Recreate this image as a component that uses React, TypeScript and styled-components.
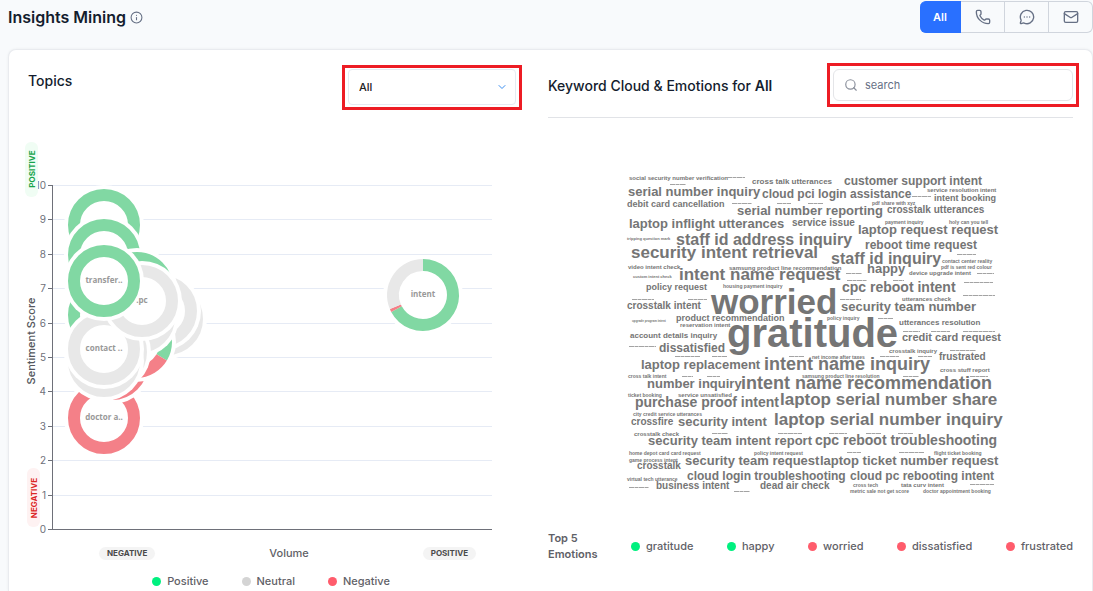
import React from 'react';
import styled, { createGlobalStyle, css } from 'styled-components';
import { Info, Phone, MessageCircleMore, Mail, Search, ChevronDown } from 'lucide-react';

const GlobalStyle = createGlobalStyle`
  * { box-sizing: border-box; }
  body { margin: 0; background: #f8fafc; font-family: Inter, "Liberation Sans", sans-serif; color: #141d2e; }
  button, input, select { font-family: inherit; }
`;

const Page = styled.div`
  display: flex;
  flex-direction: column;
  height: 100vh;
  min-height: 560px;
  overflow: hidden;
`;

const Header = styled.header`
  display: flex;
  align-items: flex-start;
  justify-content: space-between;
  padding: 1px 0 16px 8px;
`;

const PageTitle = styled.h1`
  display: flex;
  align-items: center;
  gap: 4px;
  margin: 0;
  font-size: 16px;
  line-height: 32px;
  font-weight: 600;
  color: #141d2e;
  svg { color: #667085; }
`;

const Segmented = styled.div`
  display: flex;
  height: 32px;
  border-radius: 6px;
`;

const Segment = styled.button<{ $active?: boolean }>`
  display: flex;
  align-items: center;
  justify-content: center;
  width: 44px;
  padding: 0;
  border: 1px solid #d0d5dd;
  border-left-width: 0;
  background: #f8fafc;
  color: #667085;
  font-size: 11px;
  font-weight: 600;
  &:last-child { border-radius: 0 6px 6px 0; }
  ${p => p.$active && css`
    width: 41px;
    border-color: #2970ff;
    background: #2970ff;
    color: #fff;
    border-radius: 6px 0 0 6px;
  `}
`;

const Card = styled.main`
  flex: 1;
  display: grid;
  grid-template-columns: 494fr 525fr;
  column-gap: 26px;
  align-items: start;
  margin: 0 0 0 8px;
  padding: 0 19px;
  background: #fff;
  border: 1px solid #e9ebef;
  border-bottom: 0;
  border-radius: 8px 8px 0 0;
  box-shadow: 0 0 3px rgba(16, 24, 40, 0.06);
`;

const Panel = styled.section`
  min-width: 0;
`;

const TopicsHeader = styled.div`
  display: flex;
  align-items: flex-start;
  justify-content: space-between;
  height: 80px;
  padding-top: 15px;
`;

const CloudHeader = styled.div`
  display: flex;
  align-items: center;
  justify-content: space-between;
  height: 68px;
  margin-bottom: 12px;
  padding-top: 5px;
  border-bottom: 1px solid #e1e3e7;
`;

const PanelTitle = styled.h2`
  margin: 0;
  font-size: 14px;
  line-height: 32px;
  font-weight: 500;
  color: #141d2e;
  strong { font-weight: 600; }
`;

const SelectHighlight = styled.div`
  position: relative;
  width: 180px;
  height: 45px;
  padding: 1px 3px;
  border: 3px solid #ed1c24;
  svg { position: absolute; right: 11px; top: 13px; color: #3b8ef0; pointer-events: none; }
`;

const Select = styled.select`
  appearance: none;
  width: 100%;
  height: 36px;
  padding: 0 10px;
  border: 1px solid #e6eaf2;
  border-radius: 4px;
  background: #fff;
  color: #222;
  font-size: 11px;
  font-weight: 500;
`;

const SearchHighlight = styled.div`
  margin-bottom: 2px;
  outline: 3px solid #ed1c24;
  outline-offset: 3px;
`;

const SearchBox = styled.label`
  display: flex;
  align-items: center;
  gap: 7px;
  width: 240px;
  height: 32px;
  padding: 0 10px;
  border: 1px solid #e4e5e8;
  border-radius: 6px;
  color: #8a8f9b;
`;

const SearchInput = styled.input`
  flex: 1;
  min-width: 0;
  padding: 0;
  border: 0;
  outline: 0;
  background: transparent;
  font-size: 11px;
  color: #141d2e;
  &::placeholder { color: #667085; opacity: 1; }
`;

const Drawing = styled.svg`
  display: block;
  width: 100%;
  height: auto;
  overflow: visible;
`;

const AxisRow = styled.div`
  display: flex;
  align-items: center;
  justify-content: space-between;
  height: 18px;
  margin-top: 4px;
  padding: 0 46px 0 71px;
  font-size: 11px;
  font-weight: 500;
  color: #5f6167;
`;

const Pill = styled.span`
  padding: 0 8px;
  border-radius: 7px;
  background: #f4f4f4;
  font-size: 8px;
  line-height: 13px;
  font-weight: 700;
  color: #4a4a4a;
`;

const Legend = styled.ul<{ $spread?: boolean }>`
  display: flex;
  align-items: center;
  justify-content: ${p => (p.$spread ? 'space-between' : 'center')};
  gap: ${p => (p.$spread ? '0' : '33px')};
  flex: 1;
  margin: 0;
  padding: 0;
  list-style: none;
`;

const TopicLegend = styled.div`
  display: flex;
  margin-top: 10px;
  padding-right: 8px;
`;

const LegendItem = styled.li<{ $color: string }>`
  display: flex;
  align-items: center;
  gap: 6px;
  font-size: 11px;
  line-height: 18px;
  font-weight: 500;
  color: #5f6167;
  &::before {
    content: '';
    width: 9px;
    height: 9px;
    border-radius: 50%;
    background: ${p => p.$color};
  }
`;

const Emotions = styled.div`
  display: flex;
  align-items: center;
  gap: 31px;
  margin-top: 20px;
`;

const EmotionsTitle = styled.h3`
  width: 52px;
  margin: 0;
  font-size: 11px;
  line-height: 16px;
  font-weight: 600;
  color: #5f6167;
`;

const GREEN = '#81d8a3';
const GREY = '#e8e8e8';
const RED = '#f48088';

type Slice = [string, number, number];
type Donut = { x: number; y: number; slices: Slice[]; label?: string };

const full = (c: string): Slice[] => [[c, 0, 360]];

const donuts: Donut[] = [
  { x: 104, y: 225, slices: full(GREEN) },
  { x: 104, y: 255, slices: full(GREEN) },
  { x: 104, y: 315, slices: full(GREEN) },
  { x: 104, y: 418, slices: full(RED), label: 'doctor a..' },
  { x: 112, y: 364, slices: full(RED) },
  { x: 167, y: 319, slices: full(GREY) },
  { x: 161, y: 311, slices: full(GREY) },
  { x: 136, y: 342, slices: [[GREEN, 0, 121], [RED, 121, 360]] },
  { x: 137, y: 288, slices: full(GREEN) },
  { x: 139, y: 317, slices: full(GREY) },
  { x: 111, y: 352, slices: full(GREY) },
  { x: 104, y: 361, slices: full(GREY) },
  { x: 104, y: 349, slices: full(GREY), label: 'contact ..' },
  { x: 142, y: 301, slices: full(GREY), label: '.pc' },
  { x: 104, y: 281, slices: full(GREEN), label: 'transfer..' },
  { x: 423, y: 295, slices: [[GREEN, 0, 242], [RED, 242, 247], [GREY, 247, 360]], label: 'intent' },
];

const arc = (cx: number, cy: number, from: number, to: number) => {
  const at = (deg: number) => {
    const a = ((deg - 90) * Math.PI) / 180;
    return `${cx + 30 * Math.cos(a)} ${cy + 30 * Math.sin(a)}`;
  };
  return `M${at(from)}A30 30 0 ${to - from > 180 ? 1 : 0} 1 ${at(to)}`;
};

const DonutMark = ({ x, y, slices }: Donut) => (
  <g>
    <circle cx={x} cy={y} r={40} fill="#fff" />
    {slices.map(([color, from, to]) =>
      to - from === 360 ? (
        <circle key={from} cx={x} cy={y} r={30} fill="none" stroke={color} strokeWidth={12} />
      ) : (
        <path key={from} d={arc(x, y, from, to)} fill="none" stroke={color} strokeWidth={12} />
      )
    )}
  </g>
);

const DonutLabel = styled.text`
  font: 700 8px "Open Sans", sans-serif;
  text-anchor: middle;
  fill: #999;
`;

const TickLabel = styled.text`
  font: 400 10px Inter, sans-serif;
  text-anchor: end;
  fill: #6e7079;
`;

const AxisTitle = styled.text`
  font: 500 11px Inter, sans-serif;
  text-anchor: middle;
  fill: #55575d;
`;

const AxisTag = styled.text`
  font: 700 8px Inter, sans-serif;
  text-anchor: middle;
`;

const tickY = (v: number) => Math.round(529 - v * 34.4) + 0.5;

const TopicsChart = () => (
  <Drawing viewBox="28 130 494 410" role="img" aria-label="Sentiment score by volume">
    {Array.from({ length: 11 }, (_, v) => (
      <g key={v}>
        {v > 0 && <path d={`M53 ${tickY(v)}H492`} stroke="#e6ebf5" />}
        <path d={`M48 ${tickY(v)}H53`} stroke="#6e7079" />
        <TickLabel x={46} y={tickY(v) + 3}>{v}</TickLabel>
      </g>
    ))}
    <path d="M52.5 185V529.5H492" fill="none" stroke="#6e7079" />
    {donuts.map((d, i) => <DonutMark key={i} {...d} />)}
    {donuts.map(({ x, y, label }) => label && <DonutLabel key={label} x={x} y={y + 2}>{label}</DonutLabel>)}
    <rect x={25} y={142} width={13} height={55} rx={6} fill="#f0fdf4" />
    <AxisTag transform="translate(35 169) rotate(-90)" fill="#16a34a">POSITIVE</AxisTag>
    <rect x={27} y={468} width={13} height={59} rx={6} fill="#fef2f2" />
    <AxisTag transform="translate(37 498) rotate(-90)" fill="#dc2626">NEGATIVE</AxisTag>
    <AxisTitle transform="translate(35 341) rotate(-90)">Sentiment Score</AxisTitle>
  </Drawing>
);

type Word = [string, number, number, number];

const words: Word[] = [
  ['social security number verification', 629, 180, 6],
  ['cross talk utterances', 752, 184, 8],
  ['customer support intent', 844, 185, 12],
  ['serial number inquiry', 628, 196, 13],
  ['cloud pci login assistance', 762, 198, 12],
  ['service resolution intent', 927, 192, 6],
  ['intent booking', 934, 201, 9],
  ['debit card cancellation', 627, 207, 9],
  ['pdf share with xyz', 872, 205, 5],
  ['serial number reporting', 737, 215, 13],
  ['crosstalk utterances', 887, 213, 10],
  ['laptop inflight utterances', 629, 228, 13],
  ['service issue', 792, 226, 10],
  ['payment inquiry', 885, 224, 5],
  ['holy can you tell', 949, 224, 5],
  ['laptop request request', 858, 234, 13],
  ['tripping question mark', 627, 240, 4],
  ['staff id address inquiry', 676, 245, 16],
  ['reboot time request', 865, 249, 12],
  ['security intent retrieval', 631, 258, 17],
  ['staff id inquiry', 831, 264, 16],
  ['contact center reality', 942, 263, 5],
  ['video intent check', 628, 269, 6],
  ['samsung product line recommendation', 729, 270, 6],
  ['happy', 867, 273, 13],
  ['pdf is sent red colour', 941, 269, 5],
  ['custom intent check', 633, 278, 4],
  ['intent name request', 679, 280, 17],
  ['device upgrade intent', 909, 275, 6],
  ['policy request', 646, 290, 9],
  ['housing payment inquiry', 723, 288, 5],
  ['cpc reboot intent', 842, 292, 14],
  ['crosstalk intent', 627, 309, 10],
  ['worried', 711, 314, 35],
  ['utterances check', 902, 301, 6],
  ['security team number', 841, 311, 13],
  ['upgrade program intent', 632, 322, 3],
  ['product recommendation', 676, 321, 9],
  ['policy inquiry', 827, 320, 5],
  ['utterances resolution', 899, 325, 8],
  ['reservation intent', 680, 327, 6],
  ['gratitude', 727, 347, 40],
  ['account details inquiry', 630, 338, 8],
  ['credit card request', 902, 341, 11],
  ['dissatisfied', 659, 352, 12],
  ['crosstalk inquiry', 889, 353, 6],
  ['frustrated', 939, 360, 10],
  ['net income after taxes', 812, 359, 5],
  ['laptop replacement', 641, 369, 13],
  ['intent name inquiry', 764, 370, 18],
  ['cross stuff report', 940, 372, 6],
  ['cross talk intent', 628, 378, 5],
  ['samsung product line resolution', 802, 378, 5],
  ['number inquiry', 647, 388, 13],
  ['intent name recommendation', 741, 389, 18],
  ['ticket booking', 628, 397, 5],
  ['service unsatisfied', 678, 397, 6],
  ['purchase proof intent', 635, 407, 14],
  ['laptop serial number share', 780, 405, 17],
  ['city credit service utterances', 633, 416, 5],
  ['crossfire', 631, 425, 10],
  ['security intent', 678, 426, 13],
  ['laptop serial number inquiry', 774, 425, 17],
  ['crosstalk check', 634, 436, 6],
  ['security team intent report', 648, 445, 13],
  ['cpc reboot troubleshooting', 815, 445, 14],
  ['home depot card card request', 629, 455, 5],
  ['policy intent request', 754, 455, 5],
  ['flight ticket booking', 934, 455, 5],
  ['game process intent', 629, 462, 5],
  ['security team request', 685, 465, 13],
  ['laptop ticket number request', 820, 465, 13],
  ['crosstalk', 637, 469, 10],
  ['virtual tech utterance', 627, 481, 5],
  ['cloud login troubleshooting', 687, 480, 12],
  ['cloud pc rebooting intent', 850, 480, 12],
  ['business intent', 656, 489, 10],
  ['dead air check', 760, 489, 10],
  ['cross tech', 853, 487, 5],
  ['tata curv intent', 901, 487, 6],
  ['metric sale not get score', 850, 493, 5],
  ['doctor appointment booking', 923, 493, 5],
];

/* Words too rare to be legible: x, y and length of the stroke that stands for each. */
const specks: [number, number, number][] = [
  [727, 177, 18], [670, 184, 16], [732, 203, 20], [777, 203, 14], [808, 203, 15], [912, 196, 19],
  [957, 254, 19], [846, 273, 16], [847, 280, 20], [893, 280, 11], [977, 273, 17], [964, 282, 29],
  [963, 295, 32], [840, 299, 21], [878, 318, 15], [903, 331, 17], [931, 331, 19], [963, 331, 32],
  [632, 299, 22], [688, 299, 19], [629, 346, 27], [675, 356, 25], [712, 356, 15], [789, 356, 15],
  [682, 376, 11], [707, 376, 13], [712, 433, 16], [778, 433, 24], [629, 487, 20], [734, 491, 16],
  [950, 350, 26], [880, 356, 19], [918, 356, 14], [903, 376, 16], [970, 376, 18], [829, 433, 18],
  [866, 433, 15], [898, 433, 15], [847, 452, 14], [899, 452, 25], [970, 484, 24],
];

const CloudWord = styled.text<{ $size: number }>`
  font: 700 ${p => p.$size}px "Liberation Sans", Arial, sans-serif;
  fill: #757575;
`;

const KeywordCloud = () => (
  <Drawing viewBox="548 130 525 380" role="img" aria-label="Keyword cloud">
    {words.map(([text, x, y, size]) => (
      <CloudWord key={text} x={x} y={y} $size={size}>{text}</CloudWord>
    ))}
    {specks.map(([x, y, w]) => (
      <g key={`${x}-${y}`} fill="none">
        <path d={`M${x} ${y + 0.5}h${w}`} stroke="#cfcfcf" />
        <path d={`M${x} ${y + 0.5}h${w}`} stroke="#a3a3a3" strokeDasharray="5 1 3 1" />
      </g>
    ))}
  </Drawing>
);

const POSITIVE = '#00f07f';
const NEGATIVE = '#ff5c6c';

const emotions: [string, string][] = [
  ['gratitude', POSITIVE],
  ['happy', POSITIVE],
  ['worried', NEGATIVE],
  ['dissatisfied', NEGATIVE],
  ['frustrated', NEGATIVE],
];

export default function App() {
  return (
    <Page>
      <GlobalStyle />
      <Header>
        <PageTitle>Insights Mining <Info size={13} strokeWidth={2} /></PageTitle>
        <Segmented role="group" aria-label="Channel">
          <Segment $active>All</Segment>
          <Segment aria-label="Calls"><Phone size={16} /></Segment>
          <Segment aria-label="Chats"><MessageCircleMore size={16} /></Segment>
          <Segment aria-label="Emails"><Mail size={16} /></Segment>
        </Segmented>
      </Header>
      <Card>
        <Panel>
          <TopicsHeader>
            <PanelTitle>Topics</PanelTitle>
            <SelectHighlight>
              <Select aria-label="Topic" defaultValue="All">
                <option>All</option>
              </Select>
              <ChevronDown size={12} strokeWidth={2} />
            </SelectHighlight>
          </TopicsHeader>
          <TopicsChart />
          <AxisRow>
            <Pill>NEGATIVE</Pill>
            <span>Volume</span>
            <Pill>POSITIVE</Pill>
          </AxisRow>
          <TopicLegend>
            <Legend>
              <LegendItem $color={POSITIVE}>Positive</LegendItem>
              <LegendItem $color="#d4d4d4">Neutral</LegendItem>
              <LegendItem $color={NEGATIVE}>Negative</LegendItem>
            </Legend>
          </TopicLegend>
        </Panel>
        <Panel>
          <CloudHeader>
            <PanelTitle>Keyword Cloud &amp; Emotions for <strong>All</strong></PanelTitle>
            <SearchHighlight>
              <SearchBox>
                <Search size={14} strokeWidth={2} />
                <SearchInput type="search" placeholder="search" aria-label="Search keywords" />
              </SearchBox>
            </SearchHighlight>
          </CloudHeader>
          <KeywordCloud />
          <Emotions>
            <EmotionsTitle>Top 5 Emotions</EmotionsTitle>
            <Legend $spread>
              {emotions.map(([name, color]) => (
                <LegendItem key={name} $color={color}>{name}</LegendItem>
              ))}
            </Legend>
          </Emotions>
        </Panel>
      </Card>
    </Page>
  );
}
